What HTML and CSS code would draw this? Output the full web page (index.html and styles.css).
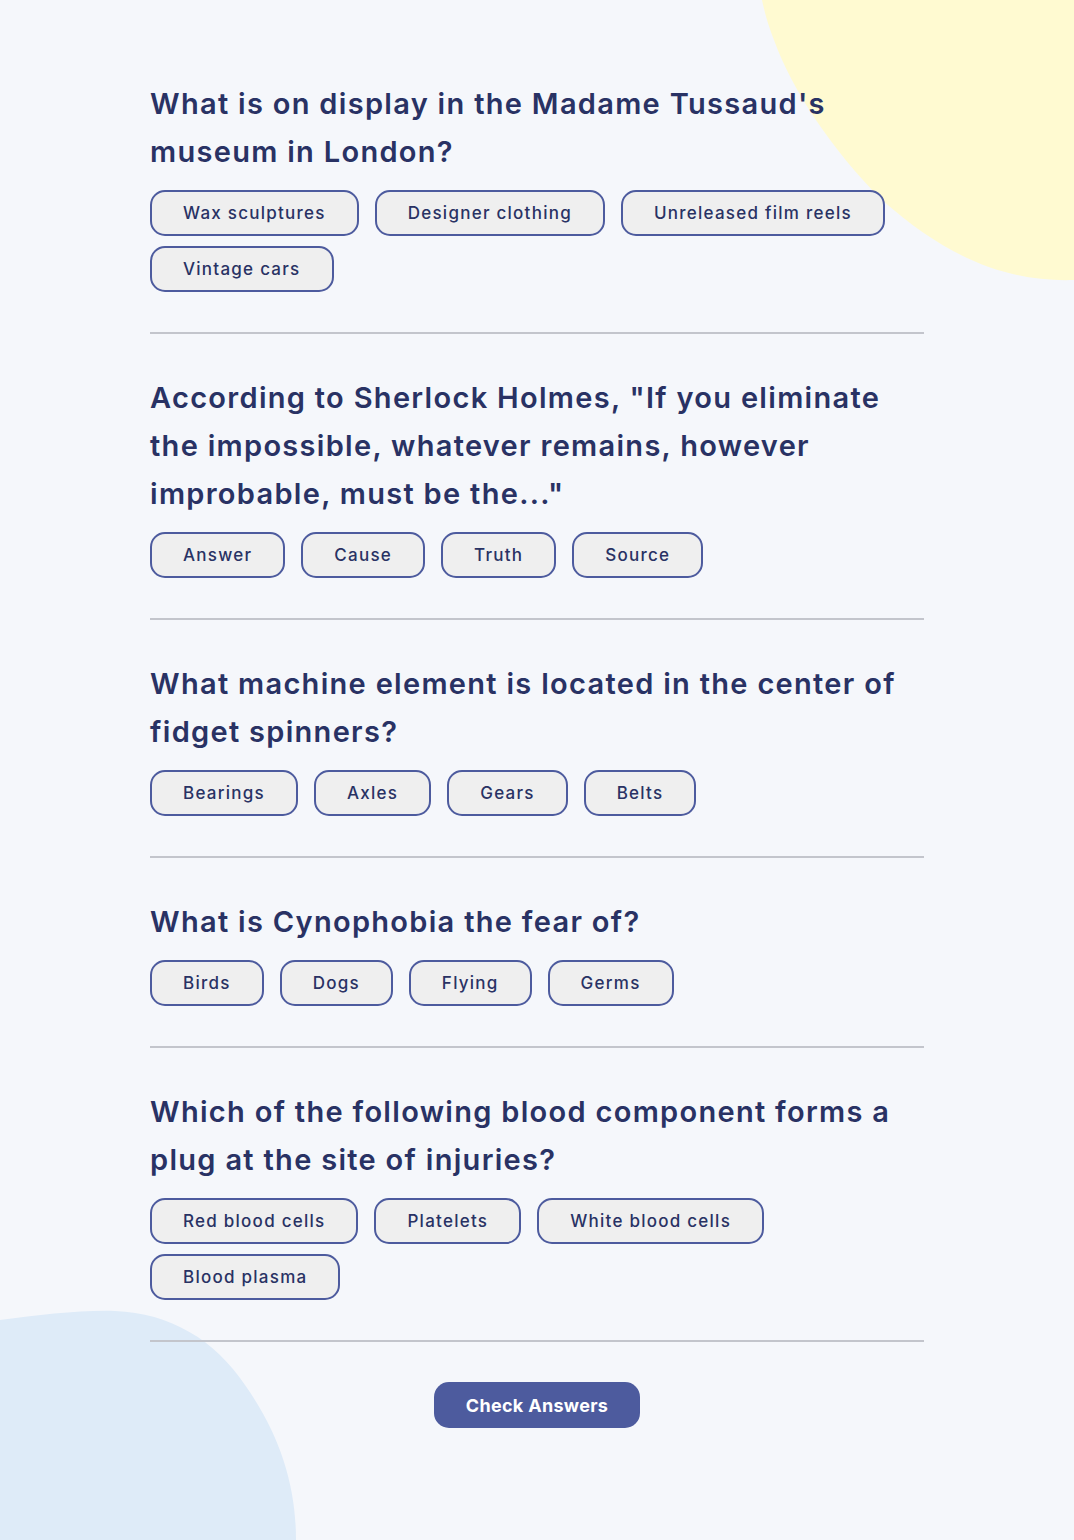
FILE: index.html
```html
<!DOCTYPE html>
<html lang="en">
<head>
<meta charset="utf-8">
<title>Quizzical</title>
<link rel="stylesheet" href="styles.css">
</head>
<body>
<svg class="blob blob-yellow" width="312" height="282" viewBox="0 0 312 282" aria-hidden="true">
  <path d="M0 0 H312 V280 C250 282 190 262 120 200 C70 150 30 90 12 40 C6 25 2 10 0 0 Z" fill="#FFFAD1"/>
</svg>
<svg class="blob blob-blue" width="300" height="230" viewBox="0 0 300 230" aria-hidden="true">
  <path d="M0 10 C40 5 80 0 115 1 C170 3 215 30 245 75 C280 125 296 175 296 230 H0 Z" fill="#DEEBF8"/>
</svg>
<main class="quiz">
  <section class="question">
    <h2 class="question-title">What is on display in the Madame Tussaud's museum in London?</h2>
    <div class="options">
      <button class="option">Wax sculptures</button>
      <button class="option">Designer clothing</button>
      <button class="option">Unreleased film reels</button>
      <button class="option">Vintage cars</button>
    </div>
  </section>
  <section class="question">
    <h2 class="question-title">According to Sherlock Holmes, "If you eliminate the impossible, whatever remains, however improbable, must be the..."</h2>
    <div class="options">
      <button class="option">Answer</button>
      <button class="option">Cause</button>
      <button class="option">Truth</button>
      <button class="option">Source</button>
    </div>
  </section>
  <section class="question">
    <h2 class="question-title">What machine element is located in the center of fidget spinners?</h2>
    <div class="options">
      <button class="option">Bearings</button>
      <button class="option">Axles</button>
      <button class="option">Gears</button>
      <button class="option">Belts</button>
    </div>
  </section>
  <section class="question">
    <h2 class="question-title">What is Cynophobia the fear of?</h2>
    <div class="options">
      <button class="option">Birds</button>
      <button class="option">Dogs</button>
      <button class="option">Flying</button>
      <button class="option">Germs</button>
    </div>
  </section>
  <section class="question">
    <h2 class="question-title">Which of the following blood component forms a plug at the site of injuries?</h2>
    <div class="options">
      <button class="option">Red blood cells</button>
      <button class="option">Platelets</button>
      <button class="option">White blood cells</button>
      <button class="option">Blood plasma</button>
    </div>
  </section>
  <div class="actions">
    <button class="check-btn">Check Answers</button>
  </div>
</main>
</body>
</html>
```
FILE: styles.css
```css
html, body {
  margin: 0;
  padding: 0;
}
body {
  background: #F5F7FB;
  min-height: 1540px;
  position: relative;
  overflow: hidden;
  font-family: "Inter", "Liberation Sans", sans-serif;
  color: #293264;
}
.blob {
  position: absolute;
  z-index: 0;
  display: block;
}
.blob-yellow {
  top: 0;
  right: 0;
}
.blob-blue {
  left: 0;
  bottom: 0;
}
.quiz {
  position: relative;
  z-index: 1;
  width: 774px;
  margin: 0 auto;
  padding-top: 80px;
}
.question {
  padding-bottom: 40px;
  border-bottom: 2px solid #C3C5CC;
  margin-bottom: 40px;
}
.question-title {
  margin: 0;
  font-size: 29px;
  line-height: 48px;
  font-weight: 600;
  letter-spacing: 1.3px;
  color: #293264;
}
.options {
  display: flex;
  flex-wrap: wrap;
  gap: 10px 16px;
  margin-top: 14px;
}
.option {
  height: 46px;
  padding: 0 31px;
  border: 2px solid #4D5B9E;
  border-radius: 15px;
  background: #EFEFEF;
  color: #293264;
  font-family: "Inter", "Liberation Sans", sans-serif;
  font-size: 17px;
  font-weight: 500;
  letter-spacing: 1.25px;
  cursor: pointer;
}
.actions {
  display: flex;
  justify-content: center;
}
.check-btn {
  height: 46px;
  padding: 0 32px;
  border: none;
  border-radius: 15px;
  background: #4D5B9E;
  color: #FFFFFF;
  font-family: "Inter", "Liberation Sans", sans-serif;
  font-size: 18px;
  font-weight: 700;
  letter-spacing: 0.3px;
  cursor: pointer;
}
```
